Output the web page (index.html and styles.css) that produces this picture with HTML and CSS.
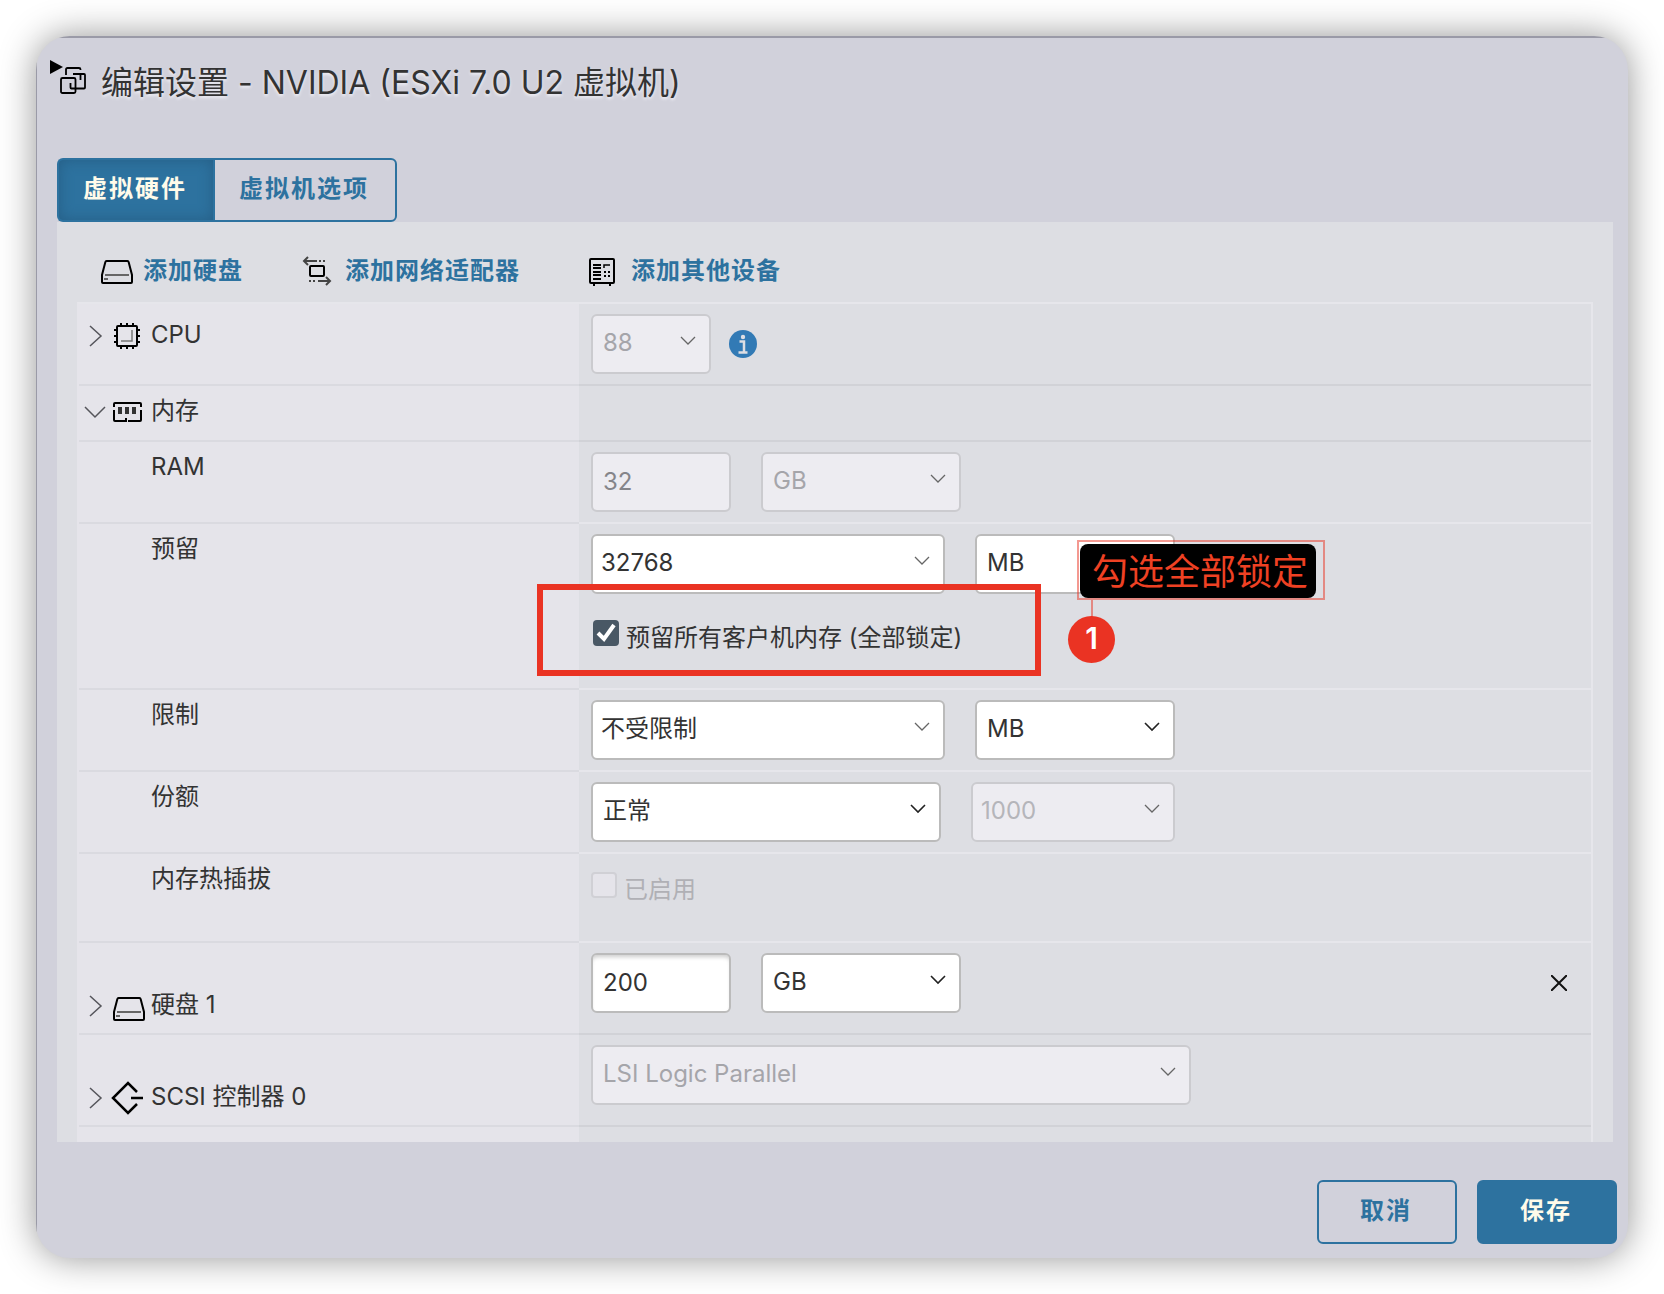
FILE: index.html
```html
<!DOCTYPE html>
<html lang="zh-CN">
<head>
<meta charset="utf-8">
<meta name="viewport" content="width=device-width, initial-scale=1">
<title>编辑设置 - NVIDIA (ESXi 7.0 U2 虚拟机)</title>
<link rel="stylesheet" href="styles.css">
</head>
<body>
<svg class="sprite" aria-hidden="true">
  <symbol id="disk" viewBox="0 0 32 24">
    <path d="M5.500 1h21c.8 0 1 .4 1.200 1.200L31 15v7c0 .7-.3 1-1 1H2c-.7 0-1-.3-1-1v-7L4.300 2.200C4.500 1.400 4.700 1 5.500 1Z" fill="none" stroke="#000" stroke-width="2"/>
    <path d="M4 15h24M3 19h4" fill="none" stroke="#666" stroke-width="2"/>
  </symbol>
  <symbol id="right" viewBox="0 0 22 22">
    <path d="M6 1l11 10L6 21" fill="none" stroke="#55555b" stroke-width="1.500"/>
  </symbol>
  <symbol id="down" viewBox="0 0 22 22">
    <path d="M1 6l10 10L21 6" fill="none" stroke="#55555b" stroke-width="1.500"/>
  </symbol>
</svg>
<main class="dialog" role="dialog" aria-labelledby="title">
  <header class="header">
    <span class="marker"></span>
    <svg class="vm-icon" viewBox="0 3 26 28" fill="none" stroke="#000" stroke-width="1.800">
      <path d="M6 9V3.500Q6 2 7.500 2H19q1.500 0 1.500 1.500V4"/>
      <path d="M1 13.500Q1 12 2.500 12H14q1.500 0 1.500 1.500v12q0 1.500-1.500 1.500H2.500Q1 27 1 25.500Z"/>
      <path d="M13 8H24q1 0 1 1v12.500q0 1-1 1H11.500q-1 0-1-1V17M20.500 8v6"/>
    </svg>
    <h1 class="title" id="title">编辑设置 - NVIDIA (ESXi 7.0 U2 虚拟机)</h1>
  </header>

  <div class="tabs" role="tablist">
    <button class="tab tab-active" type="button" role="tab" aria-selected="true">虚拟硬件</button>
    <button class="tab" type="button" role="tab" aria-selected="false">虚拟机选项</button>
  </div>

  <section class="panel">
    <div class="toolbar">
      <a class="tool" href="#add-disk"><svg class="tool-icon" viewBox="0 0 32 28"><use href="#disk" x="0" y="3" width="32" height="24"/></svg>添加硬盘</a>
      <a class="tool" href="#add-nic">
        <svg class="tool-icon" viewBox="0 0 32 28" fill="none" stroke="#444" stroke-width="2">
          <path d="M1 4h13M5 0L1 4l4 4M16 4h2M20 4h2"/>
          <path d="M27 24H15M23 20l4 4-4 4M12 24h-2M8 24H6"/>
          <rect x="7" y="9" width="14" height="10" rx="1" stroke="#000"/>
        </svg>添加网络适配器</a>
      <a class="tool" href="#add-other">
        <svg class="tool-icon" viewBox="0 0 32 28" fill="none" stroke="#000" stroke-width="2">
          <rect x="1" y="2" width="24" height="24" rx="1"/>
          <path d="M4 8h8M4 11h8M4 15h8M4 18h8M4 22h8" stroke-width="1.800"/>
          <path d="M15 11V8h6" stroke-width="1.500"/>
          <path d="M15 15h2M19 15h2M15 19h2M19 19h2M4 28h2M20 28h2"/>
        </svg>添加其他设备</a>
    </div>

    <form class="grid">
      <div class="row">
        <div class="name name-cpu">
          <svg class="caret"><use href="#right"/></svg>
          <svg class="icon" viewBox="0 0 32 32" fill="none" stroke="#000" stroke-width="2">
            <rect x="5" y="6" width="20" height="20" rx="1"/>
            <path d="M9 6V3M15 6V3M21 6V3M9 29v-3M15 29v-3M21 29v-3M5 10H2M5 16H2M5 22H2M28 10h-3M28 16h-3M28 22h-3"/>
            <path d="M20 10v11H9" stroke="#777" stroke-width="1.500"/>
          </svg>
          <label for="cpu">CPU</label>
        </div>
        <div class="field">
          <select class="control w-120" id="cpu" disabled><option>88</option></select>
          <svg class="info" viewBox="0 0 28 28" role="img" aria-label="信息">
            <circle cx="14" cy="14" r="14" fill="#327ab5"/>
            <circle cx="14" cy="7" r="2.200" fill="#dddee3"/>
            <path d="M10.500 11.500h4.500v10.500M9.500 22.500h9" fill="none" stroke="#dddee3" stroke-width="2.500"/>
          </svg>
        </div>
      </div>
      <div class="row row-group">
        <div class="name">
          <svg class="caret"><use href="#down"/></svg>
          <svg class="icon" viewBox="0 0 32 32" fill="none" stroke="#000" stroke-width="2">
            <path d="M2 11V8q0-1 1-1h25q1 0 1 1v3M2 14v10q0 1 1 1h11v-3M16 25h12q1 0 1-1V14"/>
            <path d="M6 11h4v7H6ZM13 11h4v7h-4ZM20 11h4v7h-4Z" fill="#333" stroke="none"/>
          </svg>
          <span>内存</span>
        </div>
        <div class="field"></div>
      </div>
      <div class="row row-light">
        <div class="name name-sub"><label for="ram">RAM</label></div>
        <div class="field">
          <input class="control w-140" id="ram" type="text" value="32" disabled>
          <select class="control w-200" aria-label="RAM 单位" disabled><option>GB</option></select>
        </div>
      </div>
      <div class="row row-light">
        <div class="name name-sub"><label for="reserve">预留</label></div>
        <div class="field field-reserve">
          <select class="control control-combo w-354" id="reserve"><option>32768</option></select>
          <select class="control w-200" aria-label="预留单位"><option>MB</option></select>
          <div class="check check-reserve">
            <input class="box" id="lock" type="checkbox" checked>
            <label for="lock">预留所有客户机内存 (全部锁定)</label>
          </div>
          <div class="mark-box"></div>
          <div class="callout"><span class="callout-text">勾选全部锁定</span></div>
          <span class="callout-line"></span>
          <span class="callout-num">1</span>
        </div>
      </div>
      <div class="row row-light">
        <div class="name name-sub"><label for="limit">限制</label></div>
        <div class="field">
          <select class="control control-combo w-354" id="limit"><option>不受限制</option></select>
          <select class="control control-strong w-200" aria-label="限制单位"><option>MB</option></select>
        </div>
      </div>
      <div class="row row-light">
        <div class="name name-sub"><label for="shares">份额</label></div>
        <div class="field">
          <select class="control control-strong w-350" id="shares"><option>正常</option></select>
          <select class="control control-combo control-faint w-204" aria-label="份额值" disabled><option>1000</option></select>
        </div>
      </div>
      <div class="row row-light">
        <div class="name name-sub">内存热插拔</div>
        <div class="field field-hot">
          <div class="check check-disabled">
            <input class="box" id="hot" type="checkbox" disabled>
            <label for="hot">已启用</label>
          </div>
        </div>
      </div>
      <div class="row">
        <div class="name name-low">
          <svg class="caret"><use href="#right"/></svg>
          <svg class="icon" viewBox="0 0 32 32"><use href="#disk" x="1" y="7" width="32" height="24"/></svg>
          <label for="disk1">硬盘 1</label>
        </div>
        <div class="field field-tall">
          <input class="control control-live w-140" id="disk1" type="text" value="200">
          <select class="control control-strong w-200" aria-label="硬盘单位"><option>GB</option></select>
          <button class="remove" type="button" aria-label="移除">
            <svg viewBox="0 0 16 16" width="16" height="16"><path d="M0 0l16 16M16 0L0 16" stroke="#111" stroke-width="2"/></svg>
          </button>
        </div>
      </div>
      <div class="row">
        <div class="name name-low">
          <svg class="caret"><use href="#right"/></svg>
          <svg class="icon" viewBox="0 0 32 32" fill="none" stroke="#000" stroke-width="2.500">
            <path d="M25 10L16 1L1 16L16 31L25 22M19 16h12"/>
          </svg>
          <label for="scsi">SCSI 控制器 0</label>
        </div>
        <div class="field field-tall">
          <select class="control w-600" id="scsi" disabled><option>LSI Logic Parallel</option></select>
        </div>
      </div>
      <div class="row row-rest">
        <div class="name"></div>
        <div class="field"></div>
      </div>
    </form>
  </section>

  <footer class="footer">
    <button class="btn" type="button">取消</button>
    <button class="btn btn-primary" type="button">保存</button>
  </footer>
</main>
</body>
</html>
```
FILE: styles.css
```css
* { box-sizing: border-box; }

body {
  margin: 0;
  min-height: 100vh;
  padding: 36px;
  display: flex;
  background: #fff;
  color: #333;
  font: 24px/32px Inter, "Noto Sans CJK SC", sans-serif;
}

button, input, select { font: inherit; }

.sprite { position: absolute; width: 0; height: 0; }

.dialog {
  flex: 1;
  min-width: 0;
  display: flex;
  flex-direction: column;
  padding: 0 11px 14px 21px;
  border-radius: 34px;
  background:
    linear-gradient(#9a9aa7, #9a9aa7) top / 100% 2px no-repeat,
    linear-gradient(#9a9aa7, #9a9aa7) left / 1px 100% no-repeat,
    #d1d1db;
  box-shadow: 0 0 36px rgba(0, 0, 0, .42);
}

.header {
  position: relative;
  display: flex;
  align-items: center;
  gap: 15px;
  height: 122px;
  padding: 0 0 28px 3px;
}

.marker {
  position: absolute;
  left: -7px;
  top: 24px;
  border-left: 13px solid #000;
  border-top: 7px solid transparent;
  border-bottom: 7px solid transparent;
}

.vm-icon { width: 26px; height: 28px; overflow: visible; }

.title {
  margin: 0;
  font-size: 32px;
  line-height: 40px;
  font-weight: 400;
  text-shadow: 0 2px 3px #f0f0f6;
}

.tabs { display: flex; }

.tab, .btn {
  height: 64px;
  padding: 0 26px 2px 24px;
  border: 2px solid #2d729f;
  background: none;
  color: #2d729f;
  font-weight: 700;
  letter-spacing: 2px;
}

.tab:first-child { border-radius: 6px 0 0 6px; border-right: 0; }
.tab:last-child { border-radius: 0 6px 6px 0; }

.tab-active {
  background: #2d729f;
  color: #fffbea;
  box-shadow: inset 0 0 14px #265f86;
}

.panel {
  flex: 1;
  display: flex;
  flex-direction: column;
  margin-right: 4px;
  padding: 0 20px;
  background: #dddee3;
}

.toolbar {
  display: grid;
  grid-template-columns: 202px 286px auto;
  align-items: center;
  height: 80px;
  padding: 18px 0 0 24px;
}

.tool {
  display: flex;
  align-items: center;
  gap: 10px;
  color: #2d729f;
  font-weight: 700;
  letter-spacing: 1px;
  text-decoration: none;
  white-space: nowrap;
}

.tool-icon { width: 32px; height: 28px; overflow: visible; }

.grid {
  flex: 1;
  display: flex;
  flex-direction: column;
  border: solid #e6e6eb;
  border-width: 2px 2px 0;
  border-left-color: #e5e4ea;
}

.row { display: flex; }
.row-group { min-height: 56px; }

.name {
  flex: none;
  width: 500px;
  display: flex;
  align-items: flex-start;
  padding: 9px 0 0 5px;
  border-bottom: 2px solid #dadae0;
  background: #e5e4ea;
}

.name-cpu { padding-top: 15px; }
.name-sub { padding-left: 72px; }
.name-low { padding-top: 46px; }

.caret { width: 22px; height: 22px; margin: 6px 6px 0 0; }
.icon { width: 32px; height: 32px; margin: 1px 7px 0 0; overflow: visible; }

.field {
  flex: 1;
  display: flex;
  align-items: flex-start;
  gap: 30px;
  padding: 10px 12px;
  border-bottom: 2px solid #d1d2d7;
}

.row-light .field { border-bottom-color: #e6e6eb; }
.field-tall { padding-bottom: 20px; }
.field-hot { padding: 18px 12px 35px; }

.row-rest { flex: 1; }
.row-rest .name, .row-rest .field { min-height: 15px; padding: 0; border: 0; }

.control {
  height: 60px;
  padding: 0 40px 2px 10px;
  border: 2px solid #bbb;
  border-radius: 6px;
  background: #fff;
  color: #333;
  appearance: none;
}

select.control {
  background: #fff url("data:image/svg+xml,%3Csvg xmlns='http://www.w3.org/2000/svg' width='16' height='10'%3E%3Cpath d='M1 1l7 7 7-7' fill='none' stroke='%23666' stroke-width='1.300'/%3E%3C/svg%3E") right 13px top 20px no-repeat;
}

select.control-strong {
  background-image: url("data:image/svg+xml,%3Csvg xmlns='http://www.w3.org/2000/svg' width='16' height='10'%3E%3Cpath d='M1 1l7 7 7-7' fill='none' stroke='%23222' stroke-width='1.600'/%3E%3C/svg%3E");
}

input.control { padding-right: 8px; }
.control-combo { padding-left: 8px; }
.control-live { box-shadow: inset 0 4px 4px -2px #ccc; }

.control:disabled {
  border-color: #cbcbcf;
  background-color: #edecf1;
  color: #a5a5aa;
  opacity: 1;
}

input.control:disabled { color: #85858a; }
.control-faint:disabled { color: #b5b5ba; }

.w-120 { width: 120px; }
.w-140 { width: 140px; }
.w-200 { width: 200px; }
.w-204 { width: 204px; }
.w-350 { width: 350px; }
.w-354 { width: 354px; }
.w-600 { width: 600px; }

.info { width: 28px; height: 28px; margin: 16px 0 0 -12px; }

.field-reserve {
  position: relative;
  flex-wrap: wrap;
  row-gap: 26px;
  padding-bottom: 34px;
}

.check {
  display: flex;
  align-items: flex-start;
  gap: 7px;
}

.check label { padding-top: 2px; }

.check-reserve { flex-basis: 100%; padding-left: 2px; }
.check-disabled { color: #b0b0b5; }

.box {
  appearance: none;
  flex: none;
  width: 26px;
  height: 26px;
  margin: 0;
  border: 2px solid #d0d0d5;
  border-radius: 4px;
  background: #e5e4ea;
}

.box:checked {
  border: 0;
  background: #495865 url("data:image/svg+xml,%3Csvg xmlns='http://www.w3.org/2000/svg' width='26' height='26'%3E%3Cpath d='M5 13l6 6L21 5' fill='none' stroke='white' stroke-width='4'/%3E%3C/svg%3E");
}

.remove {
  display: flex;
  margin: 14px 4px 0 auto;
  padding: 8px;
  border: 0;
  background: none;
}

/* Annotations laid over the reservation row */
.mark-box {
  position: absolute;
  left: -42px;
  top: 60px;
  width: 504px;
  height: 92px;
  border: 6px solid #ea3323;
}

.callout {
  position: absolute;
  left: 498px;
  top: 16px;
  padding: 2px 7px 0 1px;
  border: 2px solid rgba(234, 51, 35, .5);
}

.callout-text {
  display: block;
  padding: 6px 8px 4px 12px;
  border-radius: 8px;
  background: #000;
  color: #ef4123;
  font-size: 36px;
  line-height: 44px;
  white-space: nowrap;
}

.callout-line {
  position: absolute;
  left: 512px;
  top: 76px;
  width: 2px;
  height: 18px;
  background: rgba(234, 51, 35, .5);
}

.callout-num {
  position: absolute;
  left: 489px;
  top: 92px;
  width: 47px;
  height: 47px;
  border-radius: 50%;
  background: #ea3323;
  color: #fff;
  font-size: 30px;
  font-weight: 600;
  line-height: 44px;
  text-align: center;
}

.footer {
  display: flex;
  justify-content: flex-end;
  gap: 20px;
  margin-top: 38px;
}

.btn { min-width: 140px; border-radius: 6px; }
.btn-primary { background: #2d729f; color: #fffbea; }
```
